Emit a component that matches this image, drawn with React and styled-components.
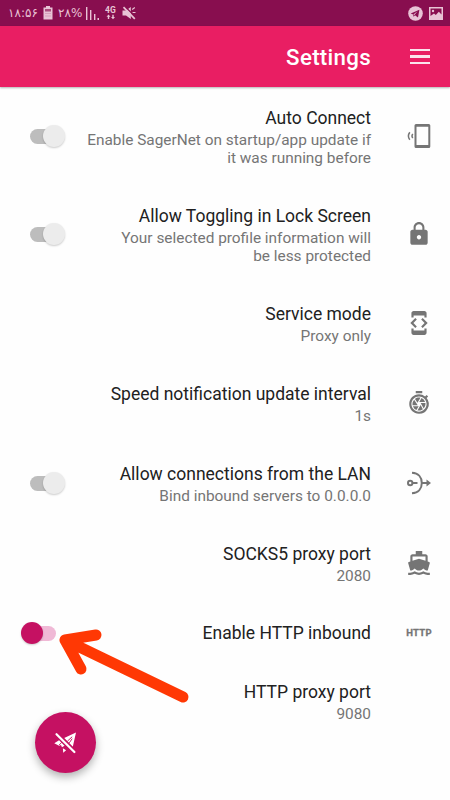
import React, { useState } from 'react';
import styled, { createGlobalStyle } from 'styled-components';
import { MdLock, MdDeveloperMode, MdShutterSpeed, MdDirectionsBoat } from 'react-icons/md';


const GlobalStyle = createGlobalStyle`
    * {
        box-sizing: border-box;
    }
    body {
        margin: 0;
        background-color: #fefefe;
        font-family: Roboto, "Liberation Sans", sans-serif;
    }
`;

const Screen = styled.div`
    position: relative;
    width: 450px;
    height: 800px;
    overflow: hidden;
    background-color: #fefefe;
`;

const StatusBar = styled.div`
    display: flex;
    align-items: center;
    justify-content: space-between;
    height: 26px;
    padding: 0 7px 0 8px;
    background-color: #880e4f;
    color: #e8c3d5;
`;

const StatusGroup = styled.div`
    display: flex;
    align-items: center;
    gap: ${(props) => props.$gap}px;
`;

const StatusText = styled.span`
    width: ${(props) => props.$width}px;
    font-family: "DejaVu Sans", sans-serif;
    font-size: 12px;
    line-height: 26px;
    white-space: nowrap;
    direction: ltr;
    unicode-bidi: bidi-override;
`;

const Toolbar = styled.header`
    display: flex;
    align-items: center;
    justify-content: flex-end;
    gap: 39px;
    height: 61px;
    padding: 1px 20px 0 0;
    background-color: #e91e63;
    box-shadow: 0 1px 2px rgba(0, 0, 0, 0.3);
    color: #fff;
`;

const ToolbarTitle = styled.h1`
    margin: 0;
    font-size: 22.3px;
    font-weight: 500;
    line-height: 28px;
    letter-spacing: 0.3px;
`;

const MenuButton = styled.button`
    display: flex;
    flex-direction: column;
    gap: 4px;
    width: 20px;
    padding: 0 0 1px;
    border: none;
    background: none;
    span {
        height: 2.5px;
        background-color: #fbe3ec;
    }
`;

const List = styled.main`
    display: flex;
    flex-direction: column;
    padding-top: 1px;
`;

const Row = styled.div`
    display: flex;
    align-items: center;
    padding: ${(props) => (props.$single ? '18px 17px 18px 21px' : '19px 17px 19px 21px')};
`;

const RowText = styled.div`
    flex: 1;
    text-align: right;
`;

const RowTitle = styled.div`
    color: #212121;
    font-size: 17.5px;
    line-height: 22px;
`;

const RowSummary = styled.div`
    padding-top: 2px;
    color: #757575;
    font-size: 15.4px;
    line-height: 18px;
    white-space: pre-line;
`;

const RowIcon = styled.div`
    display: flex;
    align-items: center;
    justify-content: center;
    width: 28px;
    margin-left: 34px;
    padding-bottom: 2px;
    color: #757575;
`;

const HttpLabel = styled.span`
    font-size: 9.5px;
    font-weight: 700;
    letter-spacing: 0.3px;
    -webkit-text-stroke: 0.3px #757575;
`;

const Toggle = styled.button`
    display: flex;
    align-items: center;
    justify-content: center;
    width: 44px;
    height: 22px;
    margin-bottom: ${(props) => (props.$single ? 0 : 2)}px;
    padding: 0;
    border: none;
    background: none;
    cursor: pointer;
`;

const Track = styled.span`
    display: flex;
    align-items: center;
    justify-content: ${(props) => (props.$on ? 'flex-start' : 'flex-end')};
    width: 26px;
    height: 15px;
    border-radius: 8px;
    background-color: ${(props) => (props.$on ? '#f0b9d6' : '#bdbdbd')};
`;

const Thumb = styled.span`
    flex: none;
    width: 22px;
    height: 22px;
    margin: 0 -9px;
    border-radius: 50%;
    background-color: ${(props) => (props.$on ? '#c51162' : '#ececec')};
    box-shadow: 0 1px 2px rgba(0, 0, 0, 0.2);
`;

const Fab = styled.button`
    position: absolute;
    left: 35px;
    top: 712px;
    display: flex;
    align-items: center;
    justify-content: center;
    width: 61px;
    height: 61px;
    padding: 0 3px 0 0;
    border: none;
    border-radius: 50%;
    background-color: #c51162;
    box-shadow: 0 4px 8px rgba(0, 0, 0, 0.3);
`;

const Arrow = styled.svg`
    position: absolute;
    left: 50px;
    top: 620px;
    pointer-events: none;
`;


const BatteryIcon = () => (
    <svg width="10" height="14" viewBox="0 0 10 14" fill="currentColor">
        <path d="M3 0h4v1.5h2.5v12h-9v-12H3z" />
        <path d="M2 3h6v2.5H2z" fill="#880e4f" opacity=".65" />
        <path d="M2 7.5h6M2 10h6" stroke="#880e4f" strokeWidth=".6" opacity=".3" />
    </svg>
);

const SignalIcon = () => (
    <svg width="14" height="13" viewBox="0 0 14 13" fill="currentColor">
        <path d="M0 0h1.4v13H0zM4 3h1.4v10H4zM8 7h1.4v6H8zM11.5 11h1.5v2h-1.5z" />
    </svg>
);

const NetworkIcon = () => (
    <svg width="12" height="14" viewBox="0 0 12 14" fill="currentColor">
        <text x="0" y="7" fontFamily="Roboto, sans-serif" fontSize="8.5" fontWeight="700">4G</text>
        <path d="M3.5 8.5l2 2.2H4.2V13H2.8v-2.3H1.5zM8 13.2L6 11h1.3V8.7h1.4V11H10z" />
    </svg>
);

const MuteIcon = () => (
    <svg width="14" height="14" viewBox="0 0 14 14" fill="currentColor">
        <path d="M.5 4.5H4L8.8 1v12L4 9.500H.5z" />
        <path d="M10.200 3.500L12.800 1.500M10.500 6.500H13.500" stroke="currentColor" strokeWidth="1.200" />
        <path d="M3 .8L14 11.200" stroke="#880e4f" strokeWidth="1.300" />
        <path d="M1.500 1.200L12.800 12.800" stroke="currentColor" strokeWidth="1.700" />
    </svg>
);

const TelegramIcon = () => (
    <svg width="15" height="15" viewBox="0 0 15 15">
        <circle cx="7.5" cy="7.5" r="7.3" fill="currentColor" />
        <path d="M2.7 7.5L11.4 3.8 10 11.4 7 9.2 5.5 10.7 5.2 8.4z" fill="#880e4f" />
        <path d="M5.3 8.4L9.6 5.2 6.4 8.9z" fill="currentColor" />
    </svg>
);

const PictureIcon = () => (
    <svg width="14" height="13" viewBox="0 0 14 13">
        <path d="M0 0h14v13H0z" fill="currentColor" />
        <path d="M1.5 1.5h11v6L9.8 4.800 6.8 8 5 6.400 1.500 9z" fill="#880e4f" />
        <circle cx="4" cy="4" r="1.2" fill="currentColor" />
    </svg>
);

const PhoneRingIcon = () => (
    <svg width="24" height="26" viewBox="0 0 24 26" fill="none" stroke="currentColor">
        <path d="M9 1h12.800q1.500 0 1.500 1.500v21q0 1.500-1.500 1.500H9q-1.500 0-1.500-1.500v-21Q7.500 1 9 1zm.500 2.800v18.200h11.800V3.800z" fill="currentColor" stroke="none" fillRule="evenodd" />
        <path d="M2.800 9.200Q0 13 2.800 16.800M5.800 11Q4.200 13 5.800 15" strokeWidth="1.500" />
    </svg>
);

const LanIcon = () => (
    <svg width="24" height="24" viewBox="0 0 24 24" fill="none" stroke="currentColor" strokeWidth="2">
        <circle cx="3.2" cy="12" r="2.2" />
        <path d="M5.500 12H10.500M5 1.800C11.400 2.200 14.800 6.500 14.800 12S11.400 21.800 5 22.200M15 12h6" />
        <path d="M19.500 8.500L24 12l-4.500 3.500z" fill="currentColor" stroke="none" />
    </svg>
);

const PlaneOffIcon = () => (
    <svg width="23" height="23" viewBox="0 0 72 72" fill="#fff">
        <path d="M72 5L35 22 62 49zM4 38L19 29 36 46 28 51 25 44 19 46z" />
        <path d="M60 18L45 32M19 44L28 35M51 37L60 24" stroke="#c51162" strokeWidth="3" />
        <path d="M31 54L41 60 32 68z" />
        <path d="M15 6L72 63" stroke="#c51162" strokeWidth="3.500" />
        <path d="M11 10L67 66" stroke="#fff" strokeWidth="7" strokeLinecap="round" />
    </svg>
);


const settings = [
    { key: 'autoConnect', title: 'Auto Connect', summary: 'Enable SagerNet on startup/app update if\nit was running before', icon: <PhoneRingIcon />, toggle: true },
    { key: 'lockScreen', title: 'Allow Toggling in Lock Screen', summary: 'Your selected profile information will\nbe less protected', icon: <MdLock size={26} />, toggle: true },
    { key: 'serviceMode', title: 'Service mode', summary: 'Proxy only', icon: <MdDeveloperMode size={26} /> },
    { key: 'speedInterval', title: 'Speed notification update interval', summary: '1s', icon: <MdShutterSpeed size={26} /> },
    { key: 'allowLan', title: 'Allow connections from the LAN', summary: 'Bind inbound servers to 0.0.0.0', icon: <LanIcon />, toggle: true },
    { key: 'socksPort', title: 'SOCKS5 proxy port', summary: '2080', icon: <MdDirectionsBoat size={26} /> },
    { key: 'httpInbound', title: 'Enable HTTP inbound', icon: <HttpLabel>HTTP</HttpLabel>, toggle: true },
    { key: 'httpPort', title: 'HTTP proxy port', summary: '9080' },
];

function App() {
    const [enabled, setEnabled] = useState({ httpInbound: true });

    const handleToggle = (key) => {
        setEnabled({ ...enabled, [key]: !enabled[key] });
    };

    return (
        <Screen>
            <GlobalStyle />
            <StatusBar>
                <StatusGroup $gap={5}>
                    <StatusText $width={30}>۱۸:۵۶</StatusText>
                    <BatteryIcon />
                    <StatusText $width={23}>۲۸%</StatusText>
                    <SignalIcon />
                    <NetworkIcon />
                    <MuteIcon />
                </StatusGroup>
                <StatusGroup $gap={6}>
                    <TelegramIcon />
                    <PictureIcon />
                </StatusGroup>
            </StatusBar>
            <Toolbar>
                <ToolbarTitle>Settings</ToolbarTitle>
                <MenuButton aria-label="Menu">
                    <span />
                    <span />
                    <span />
                </MenuButton>
            </Toolbar>
            <List>
                {settings.map((item) => (
                    <Row key={item.key} $single={!item.summary}>
                        {item.toggle && (
                            <Toggle $single={!item.summary} onClick={() => handleToggle(item.key)} aria-label={item.title}>
                                <Track $on={enabled[item.key]}>
                                    <Thumb $on={enabled[item.key]} />
                                </Track>
                            </Toggle>
                        )}
                        <RowText>
                            <RowTitle>{item.title}</RowTitle>
                            {item.summary && <RowSummary>{item.summary}</RowSummary>}
                        </RowText>
                        <RowIcon>{item.icon}</RowIcon>
                    </Row>
                ))}
            </List>
            <Fab aria-label="Connect">
                <PlaneOffIcon />
            </Fab>
            <Arrow width="150" height="90" viewBox="0 0 150 90" fill="none" stroke="#ff3804" strokeWidth="11" strokeLinecap="round" strokeLinejoin="round">
                <path d="M133 77L15 20M46 15L15 20 31 49" />
            </Arrow>
        </Screen>
    );
}

export default App;
